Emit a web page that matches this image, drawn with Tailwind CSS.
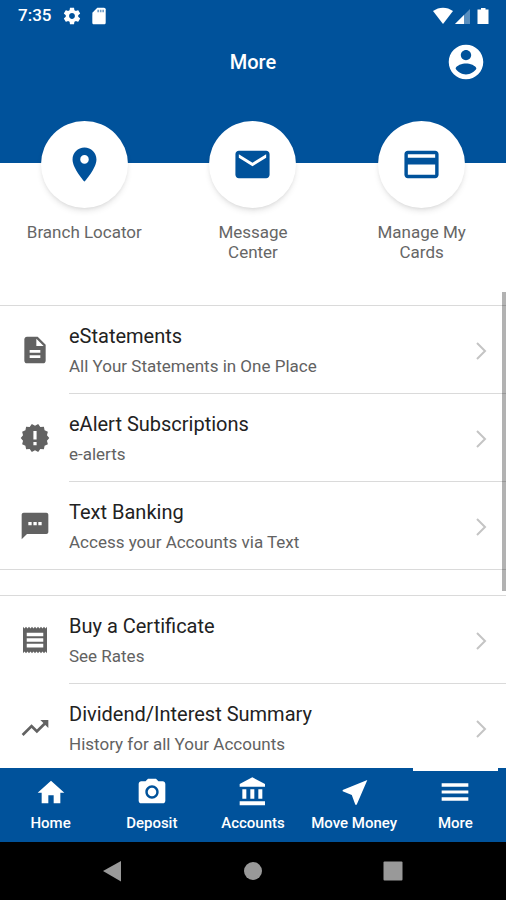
<!DOCTYPE html>
<html lang="en">

<head>
    <meta charset="UTF-8">
    <meta name="viewport" content="width=device-width, initial-scale=1.0">
    <script src="https://cdn.jsdelivr.net/npm/@tailwindcss/browser@4"></script>
    <title>More</title>
</head>

<body class="bg-white font-[Roboto,sans-serif]">
    <div class="flex flex-col h-screen overflow-hidden">
        <!-- Header -->
        <header class="bg-[#00529b] text-white h-[163px] shrink-0">
            <!-- Status bar -->
            <div class="flex items-center justify-between h-8 pl-[18px] pr-3.5">
                <div class="flex items-center gap-[7px]">
                    <span class="text-[17px] font-medium mr-1">7:35</span>
                    <svg class="size-5" viewBox="0 0 24 24" fill="currentColor">
                        <path d="M19.43 12.98c.04-.32.07-.64.07-.98s-.03-.66-.07-.98l2.11-1.65c.19-.15.24-.42.12-.64l-2-3.46c-.12-.22-.39-.3-.61-.22l-2.49 1c-.52-.4-1.08-.73-1.69-.98l-.38-2.65C14.46 2.18 14.25 2 14 2h-4c-.25 0-.46.18-.49.42l-.38 2.65c-.61.25-1.17.59-1.69.98l-2.49-1c-.23-.09-.49 0-.61.22l-2 3.46c-.13.22-.07.49.12.64l2.11 1.65c-.04.32-.07.65-.07.98s.03.66.07.98l-2.11 1.65c-.19.15-.24.42-.12.64l2 3.46c.12.22.39.3.61.22l2.49-1c.52.4 1.08.73 1.69.98l.38 2.65c.03.24.24.42.49.42h4c.25 0 .46-.18.49-.42l.38-2.65c.61-.25 1.17-.59 1.69-.98l2.49 1c.23.09.49 0 .61-.22l2-3.46c.12-.22.07-.49-.12-.64l-2.11-1.65zM12 15.5c-1.93 0-3.5-1.57-3.5-3.5s1.57-3.5 3.5-3.5 3.5 1.57 3.5 3.5-1.57 3.5-3.5 3.5z" />
                    </svg>
                    <svg class="size-5" viewBox="0 0 24 24" fill="currentColor">
                        <path d="M18 2h-8L4.02 8 4 20c0 1.100.9 2 2 2h12c1.100 0 2-.9 2-2V4c0-1.100-.9-2-2-2z" />
                        <path d="M10 4.500h2v3h-2zM13 4.500h2v3h-2zM16 4.500h2v3h-2z" fill="#00529b" opacity=".55" />
                    </svg>
                </div>
                <div class="flex items-center">
                    <svg class="w-[22px] h-5" viewBox="0 0 22 20">
                        <path d="M1 5c6-4.500 14-4.500 20 0L11 18z" fill="#fff" />
                    </svg>
                    <svg class="w-[18px] h-5" viewBox="0 0 18 20">
                        <path d="M1 18L16 3v15z" fill="#fff" opacity=".35" />
                        <path d="M1 18l9-9v9z" fill="#fff" />
                    </svg>
                    <svg class="size-5" viewBox="0 0 20 20">
                        <path d="M9 2h4.500v1.500h3V18h-11V3.500H9z" fill="#fff" />
                    </svg>
                </div>
            </div>
            <!-- Title bar -->
            <div class="grid grid-cols-3 items-center h-[60px] px-[21px]">
                <h1 class="col-start-2 text-xl font-medium text-center">More</h1>
                <button type="button" aria-label="Profile" class="justify-self-end">
                    <svg class="size-[38px]" viewBox="1 1 22 22" fill="currentColor">
                        <path d="M12 2C6.48 2 2 6.48 2 12s4.48 10 10 10 10-4.48 10-10S17.52 2 12 2zm0 3c1.66 0 3 1.34 3 3s-1.34 3-3 3-3-1.34-3-3 1.34-3 3-3zm0 14.200c-2.500 0-4.710-1.280-6-3.220.03-1.990 4-3.080 6-3.080 1.990 0 5.970 1.090 6 3.080-1.290 1.940-3.500 3.220-6 3.220z" />
                    </svg>
                </button>
            </div>
        </header>

        <main class="relative flex-1 min-h-0 flex flex-col">
            <!-- Shortcuts -->
            <div class="grid grid-cols-3 h-[142px] shrink-0 text-[17px] leading-5 text-center text-[#666]">
                <a href="#" class="flex flex-col items-center gap-3.5 -mt-[42px] h-fit">
                    <span class="flex items-center justify-center size-[87px] rounded-full bg-white shadow-md text-[#00529b]">
                        <svg class="size-[41px]" viewBox="0 0 24 24" fill="currentColor">
                            <path d="M12 2C8.130 2 5 5.130 5 9c0 5.250 7 13 7 13s7-7.750 7-13c0-3.870-3.130-7-7-7zm0 9.500c-1.380 0-2.500-1.120-2.500-2.500s1.120-2.500 2.500-2.500 2.500 1.120 2.500 2.500-1.120 2.500-2.500 2.500z" />
                        </svg>
                    </span>
                    <span class="w-32">Branch Locator</span>
                </a>
                <a href="#" class="flex flex-col items-center gap-3.5 -mt-[42px] h-fit">
                    <span class="flex items-center justify-center size-[87px] rounded-full bg-white shadow-md text-[#00529b]">
                        <svg class="size-[41px]" viewBox="0 0 24 24" fill="currentColor">
                            <path d="M20 4H4c-1.100 0-1.990.9-1.990 2L2 18c0 1.100.9 2 2 2h16c1.100 0 2-.9 2-2V6c0-1.100-.9-2-2-2zm0 4l-8 5-8-5V6l8 5 8-5v2z" />
                        </svg>
                    </span>
                    <span class="w-24">Message Center</span>
                </a>
                <a href="#" class="flex flex-col items-center gap-3.5 -mt-[42px] h-fit">
                    <span class="flex items-center justify-center size-[87px] rounded-full bg-white shadow-md text-[#00529b]">
                        <svg class="size-[41px]" viewBox="0 0 24 24" fill="currentColor">
                            <path d="M20 4H4c-1.110 0-1.990.89-1.990 2L2 18c0 1.110.89 2 2 2h16c1.110 0 2-.89 2-2V6c0-1.110-.89-2-2-2zm0 14H4v-6h16v6zm0-10H4V6h16v2z" />
                        </svg>
                    </span>
                    <span class="w-24">Manage My Cards</span>
                </a>
            </div>

            <!-- Menu -->
            <div class="flex-1 min-h-0 overflow-hidden text-[#626262]">
                <ul class="border-y border-[#dadada]">
                    <li>
                        <a href="#" class="flex items-center pl-[19px]">
                            <svg class="size-8 mr-[18px] shrink-0" viewBox="0 0 24 24" fill="currentColor">
                                <path d="M14 2H6c-1.100 0-1.990.9-1.990 2L4 20c0 1.100.89 2 1.990 2H18c1.100 0 2-.9 2-2V8l-6-6zm2 16H8v-2h8v2zm0-4H8v-2h8v2zm-3-5V3.500L18.500 9H13z" />
                            </svg>
                            <span class="flex flex-1 items-center justify-between h-[88px] pt-0.5 pr-4 border-b border-[#dadada]">
                                <span class="flex flex-col gap-0.5">
                                    <span class="text-xl leading-7 text-[#222]">eStatements</span>
                                    <span class="text-[17px] leading-7">All Your Statements in One Place</span>
                                </span>
                                <svg class="w-4 h-5 text-[#c4c4c4]" viewBox="0 0 16 20" fill="none" stroke="currentColor" stroke-width="2"><path d="M3 2l8 8-8 8" /></svg>
                            </span>
                        </a>
                    </li>
                    <li>
                        <a href="#" class="flex items-center pl-[19px]">
                            <svg class="size-8 mr-[18px] shrink-0" viewBox="0 0 24 24" fill="currentColor">
                                <path fill-rule="evenodd" d="M22.7 12L20.97 14.05L21.64 16.64L19.19 17.74L18.67 20.37L15.99 20.29L14.38 22.43L12 21.2L9.62 22.43L8.01 20.29L5.33 20.37L4.81 17.74L2.36 16.64L3.03 14.05L1.3 12L3.03 9.95L2.36 7.36L4.81 6.26L5.33 3.63L8.01 3.71L9.62 1.57L12 2.8L14.38 1.57L15.99 3.71L18.67 3.63L19.19 6.26L21.64 7.36L20.97 9.95zM10.8 6.8v6.400h2.400V6.800zM10.800 15v2.400h2.400V15z" />
                            </svg>
                            <span class="flex flex-1 items-center justify-between h-[88px] pt-0.5 pr-4 border-b border-[#dadada]">
                                <span class="flex flex-col gap-0.5">
                                    <span class="text-xl leading-7 text-[#222]">eAlert Subscriptions</span>
                                    <span class="text-[17px] leading-7">e-alerts</span>
                                </span>
                                <svg class="w-4 h-5 text-[#c4c4c4]" viewBox="0 0 16 20" fill="none" stroke="currentColor" stroke-width="2"><path d="M3 2l8 8-8 8" /></svg>
                            </span>
                        </a>
                    </li>
                    <li>
                        <a href="#" class="flex items-center pl-[19px]">
                            <svg class="size-8 mr-[18px] shrink-0" viewBox="0 0 24 24" fill="currentColor">
                                <path d="M20.500 2H3.500C2.700 2 2 2.600 2 3.500V22l4-4h14.500c.8 0 1.500-.7 1.500-1.500v-13c0-.9-.7-1.500-1.500-1.500zM9.500 11.500H7V9h2.500v2.500zm3.800 0h-2.500V9h2.500v2.500zm3.700 0h-2.500V9H17v2.500z" />
                            </svg>
                            <span class="flex flex-1 items-center justify-between h-[87px] pt-0.5 pr-4">
                                <span class="flex flex-col gap-0.5">
                                    <span class="text-xl leading-7 text-[#222]">Text Banking</span>
                                    <span class="text-[17px] leading-7">Access your Accounts via Text</span>
                                </span>
                                <svg class="w-4 h-5 text-[#c4c4c4]" viewBox="0 0 16 20" fill="none" stroke="currentColor" stroke-width="2"><path d="M3 2l8 8-8 8" /></svg>
                            </span>
                        </a>
                    </li>
                </ul>
                <ul class="mt-[25px] border-t border-[#dadada]">
                    <li>
                        <a href="#" class="flex items-center pl-[19px]">
                            <svg class="size-8 mr-[18px] shrink-0" viewBox="0 0 24 24" fill="currentColor">
                                <path fill-rule="evenodd" d="M21 2l-1.125 1.300L18.750 2l-1.125 1.300L16.500 2l-1.125 1.300L14.250 2l-1.125 1.300L12 2l-1.125 1.300L9.750 2 8.625 3.300 7.500 2 6.375 3.300 5.250 2 4.125 3.300 3 2v20l1.125-1.300L5.250 22l1.125-1.300L7.500 22l1.125-1.300L9.750 22l1.125-1.300L12 22l1.125-1.300L14.250 22l1.125-1.300L16.500 22l1.125-1.300L18.750 22l1.125-1.300L21 22zM5.800 6.500v2.700h12.400V6.500zM5.800 10.700v2.700h12.400v-2.700zM5.800 14.900v2.700h12.400v-2.700z" />
                            </svg>
                            <span class="flex flex-1 items-center justify-between h-[88px] pt-0.5 pr-4 border-b border-[#dadada]">
                                <span class="flex flex-col gap-0.5">
                                    <span class="text-xl leading-7 text-[#222]">Buy a Certificate</span>
                                    <span class="text-[17px] leading-7">See Rates</span>
                                </span>
                                <svg class="w-4 h-5 text-[#c4c4c4]" viewBox="0 0 16 20" fill="none" stroke="currentColor" stroke-width="2"><path d="M3 2l8 8-8 8" /></svg>
                            </span>
                        </a>
                    </li>
                    <li>
                        <a href="#" class="flex items-center pl-[19px]">
                            <svg class="size-8 mr-[18px] shrink-0" viewBox="0 0 24 24" fill="currentColor">
                                <path d="M16 6l2.290 2.290-4.880 4.880-4-4L2 16.590 3.410 18l6-6 4 4 6.300-6.290L22 12V6z" />
                            </svg>
                            <span class="flex flex-1 items-center justify-between h-[88px] pt-0.5 pr-4 border-b border-[#dadada]">
                                <span class="flex flex-col gap-0.5">
                                    <span class="text-xl leading-7 text-[#222]">Dividend/Interest Summary</span>
                                    <span class="text-[17px] leading-7">History for all Your Accounts</span>
                                </span>
                                <svg class="w-4 h-5 text-[#c4c4c4]" viewBox="0 0 16 20" fill="none" stroke="currentColor" stroke-width="2"><path d="M3 2l8 8-8 8" /></svg>
                            </span>
                        </a>
                    </li>
                </ul>
            </div>

            <!-- Scroll thumb -->
            <div class="absolute right-0 top-[129px] w-1 h-[299px] bg-black/30"></div>
        </main>

        <!-- Tab bar -->
        <nav class="grid grid-cols-5 h-[74px] shrink-0 bg-[#00529b] text-white text-[15px] leading-5 font-medium">
            <a href="#" class="flex flex-col items-center gap-[5px] pt-2">
                <svg class="size-8" viewBox="0 0 24 24" fill="currentColor">
                    <path d="M10 20.500v-6h4v6h5v-8h3l-10-9-10 9h3v8z" />
                </svg>
                Home
            </a>
            <a href="#" class="flex flex-col items-center gap-[5px] pt-2">
                <svg class="size-8" viewBox="0 0 24 24" fill="currentColor">
                    <path d="M9 2L7.170 4H4c-1.100 0-2 .9-2 2v12.500c0 1.100.9 2 2 2h16c1.100 0 2-.9 2-2V6c0-1.100-.9-2-2-2h-3.170L15 2H9zm3 15c-2.760 0-5-2.240-5-5s2.240-5 5-5 5 2.240 5 5-2.240 5-5 5z" />
                    <circle cx="12" cy="12" r="3.200" />
                </svg>
                Deposit
            </a>
            <a href="#" class="flex flex-col items-center gap-[5px] pt-2">
                <svg class="size-8" viewBox="0 0 24 24" fill="currentColor">
                    <path d="M4 10v7h3v-7H4zm6 0v7h3v-7h-3zM2 22h19v-3H2v3zm14-12v7h3v-7h-3zm-4.500-9L2 6v2h19V6l-9.500-5z" />
                </svg>
                Accounts
            </a>
            <a href="#" class="flex flex-col items-center gap-[5px] pt-2 whitespace-nowrap">
                <svg class="size-8" viewBox="0 0 24 24" fill="currentColor">
                    <path d="M22 3L3.500 10.530v.98l6.840 2.650L13 21.500h1L22 3z" />
                </svg>
                Move Money
            </a>
            <a href="#" class="relative flex flex-col items-center gap-[5px] pt-2" aria-current="page">
                <span class="absolute top-0 inset-x-2 h-[3px] bg-white"></span>
                <svg class="size-8" viewBox="0 0 24 24" fill="currentColor">
                    <path d="M2 5.500h20v2.500H2zM2 10.800h20v2.400H2zM2 16h20v2.500H2z" />
                </svg>
                More
            </a>
        </nav>

        <!-- System navigation -->
        <div class="flex items-center justify-center gap-[112px] h-[58px] shrink-0 bg-black text-[#999]">
            <button type="button" aria-label="Back">
                <svg class="size-7" viewBox="0 0 28 28" fill="currentColor"><path d="M22 4v20.500L4 14z" /></svg>
            </button>
            <button type="button" aria-label="Home">
                <svg class="size-7" viewBox="0 0 28 28" fill="currentColor"><circle cx="14" cy="14" r="9" /></svg>
            </button>
            <button type="button" aria-label="Recent apps">
                <svg class="size-7" viewBox="0 0 28 28" fill="currentColor"><rect x="4.500" y="4.500" width="19" height="19" rx="1" /></svg>
            </button>
        </div>
    </div>
</body>

</html>
